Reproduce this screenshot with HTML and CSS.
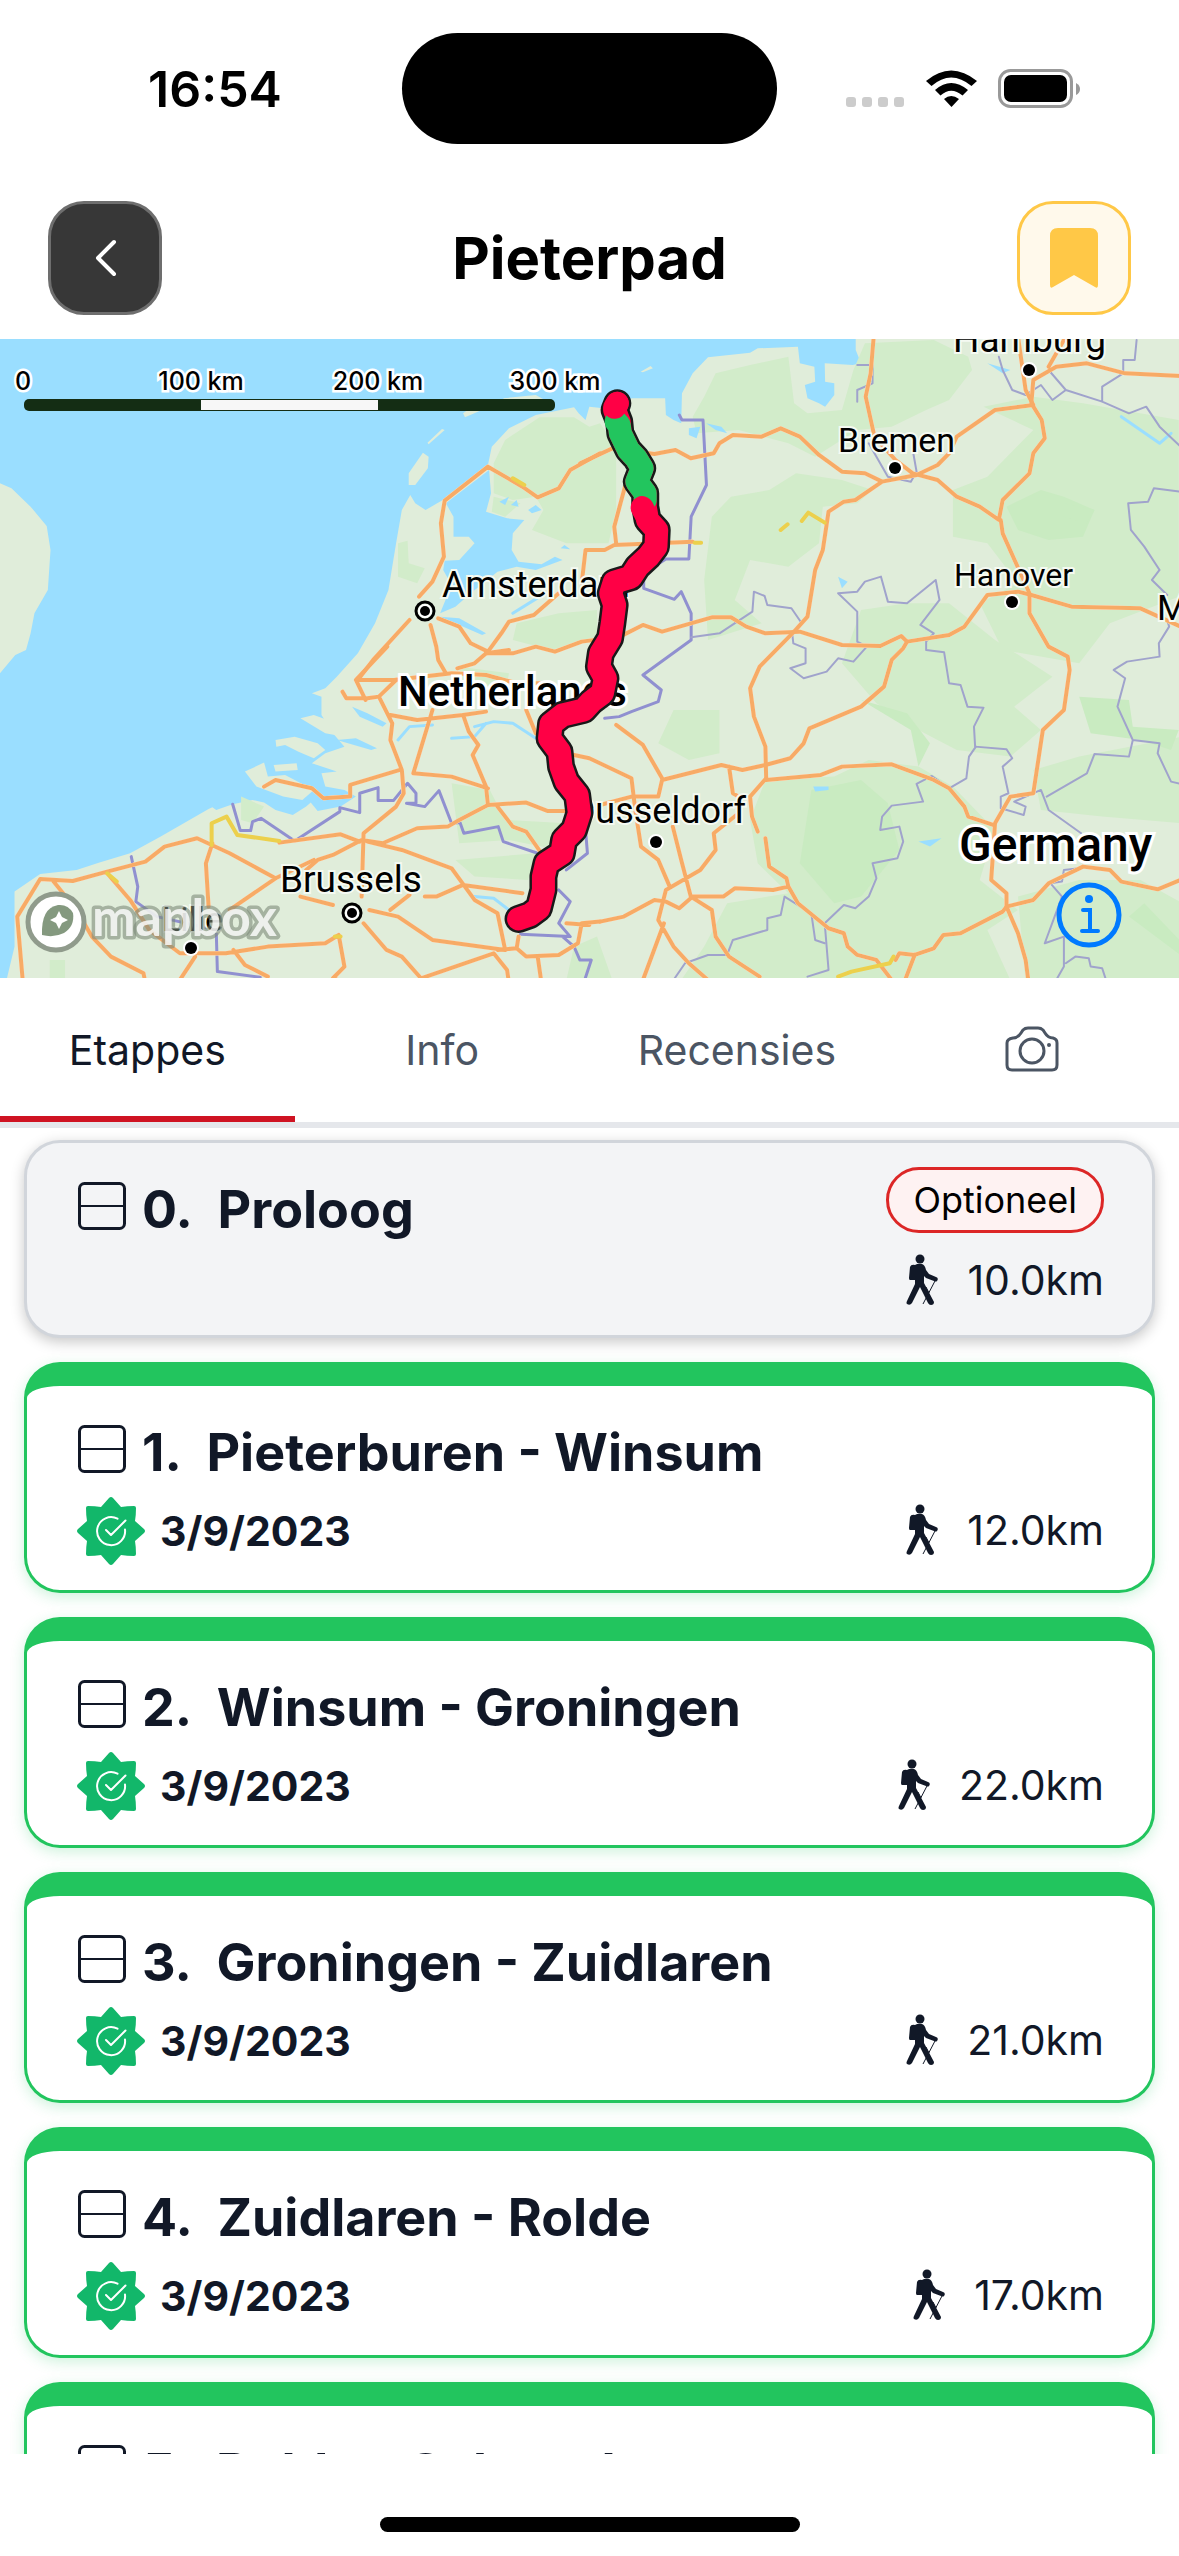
FILE: index.html
```html
<!DOCTYPE html>
<html lang="nl">
<head>
    <meta charset="UTF-8">
    <meta name="viewport" content="width=device-width, initial-scale=1.0">
    <title>Pieterpad</title>
    <link rel="stylesheet" href="styles.css">
</head>
<body>
    <!-- shared icons -->
    <svg class="sprite" aria-hidden="true">
        <symbol id="icon-split" viewBox="0 0 54 54">
            <rect x="4.500" y="4.500" width="45" height="45" rx="5" fill="none" stroke="currentColor" stroke-width="3"/>
            <path d="M4 27H50" stroke="currentColor" stroke-width="2"/>
        </symbol>
        <symbol id="icon-done" viewBox="0 0 72 72">
            <path d="M38 3L46 12Q52 11 59 11Q61 11 61 13Q61 20 60 26L69 34Q71 36 69 38L60 46Q61 52 61 59Q61 61 59 61Q52 61 46 60L38 69Q36 71 34 69L26 60Q20 61 13 61Q11 61 11 59Q11 52 12 46L3 38Q1 36 3 34L12 26Q11 20 11 13Q11 11 13 11Q20 11 26 12L34 3Q36 1 38 3Z" fill="#12b76a"/>
            <path d="M42.500 23.700A14 14 0 1 0 50 34.500M31 35L36 40L50.500 25.500" fill="none" stroke="#fff" stroke-width="2" stroke-linecap="round" stroke-linejoin="round"/>
        </symbol>
        <symbol id="icon-hiker" viewBox="0 0 36 54">
            <circle cx="15" cy="6" r="4.500"/>
            <path d="M5 14Q6 11 10 12Q13 10 17 11Q20 12 21 17L24 21L31 24Q34 25 32 28Q31 29 29 28L21 25L19 23V30L29 49Q29 52 26 52Q24 52 23 50L15 34L7 50Q5 53 2 51Q1 50 2 48L10 31V27H5Q4 27 4 25Z"/>
            <path d="M31 26L18 51M24 40L21 34" fill="none" stroke="currentColor" stroke-width="1"/>
        </symbol>
    </svg>

    <div class="app">
        <div class="status">
            <span class="time">16:54</span>
            <span class="island"></span>
            <svg class="status-icons" viewBox="0 0 240 48" aria-hidden="true">
                <g fill="#ccc">
                    <rect x="6" y="32" width="10" height="10" rx="3"/>
                    <rect x="22" y="32" width="10" height="10" rx="3"/>
                    <rect x="38" y="32" width="10" height="10" rx="3"/>
                    <rect x="54" y="32" width="10" height="10" rx="3"/>
                </g>
                <path d="M86 16Q111 -5 137 16L131.500 21Q111 4 91.500 21ZM95 25Q111 11 128 25L122.500 30.500Q111 21 100.500 30.500ZM104 34Q111 28 119 34L111.500 42Z"/>
                <rect x="159.500" y="5.500" width="72" height="36" rx="11" fill="none" stroke="#999" stroke-width="3"/>
                <rect x="164" y="10" width="63" height="27" rx="7"/>
                <path d="M236 18Q240 20 240 24Q240 28 236 30Z" fill="#999"/>
            </svg>
        </div>

        <header class="header">
            <button class="square-btn back" aria-label="Terug">
                <svg width="54" height="54" viewBox="0 0 54 54"><path d="M36 11L20 27L36 43" fill="none" stroke="#fff" stroke-width="4" stroke-linecap="round" stroke-linejoin="round"/></svg>
            </button>
            <h1>Pieterpad</h1>
            <button class="square-btn saved" aria-label="Bewaard">
                <svg width="54" height="66" viewBox="0 0 54 66"><path d="M11 3H43Q51 3 51 11V60Q51 64 48 62L27 50L6 62Q3 64 3 60V11Q3 3 11 3Z" fill="#ffc847"/></svg>
            </button>
        </header>

        <div class="map">
            <svg class="map-canvas" viewBox="0 0 1179 639" preserveAspectRatio="xMidYMid slice">
                <g transform="scale(.3827 .3333) translate(0 -27)">
                    <!-- land -->
                    <g class="land">
                        <path d="M0 460L30 475L80 530L122 588L132 660L125 780L90 850L80 910L68 960L40 975L0 1030Z"/>
                        <path d="M15 1960L38 1850L38 1685L105 1632L200 1620L260 1598L340 1570L420 1520L545 1437L555 1432L565 1440L608 1423L660 1410L690 1418L720 1440L765 1455L800 1430L812 1418L830 1443L890 1430L930 1400L900 1380L850 1370L840 1330L880 1325L815 1300L850 1270L900 1250L870 1210L840 1155L840 1100L815 1090L850 1075L880 1040L935 970L980 880L1015 780L1035 640L1050 540L1072 495L1085 520L1112 540L1165 505L1275 405L1285 350L1330 295L1400 255L1500 232L1512 250L1530 270L1540 230L1620 240L1650 205L1738 205L1740 255L1760 270L1780 280L1782 190L1810 130L1850 82L1960 68L1980 55L2085 50L2090 100L2128 110L2130 155L2103 165L2110 205L2140 220L2156 230L2180 195L2180 160L2156 155L2155 100L2228 105L2250 100L2236 60L2236 20L3090 20V1960Z"/>
                        <path d="M1068 430L1105 368L1120 380L1118 415L1085 465H1068ZM1117 338L1155 297L1162 300L1120 343ZM1210 250L1240 225L1270 235L1215 262ZM1315 205L1400 195L1420 208L1320 215ZM1674 125L1700 108L1706 115L1680 127Z"/>
                        <path d="M640 1325L690 1298L700 1340L745 1335L820 1380L790 1410L740 1400L670 1370ZM715 1305L775 1300L778 1320L720 1325ZM720 1230L770 1220L830 1240L850 1260L820 1285L780 1265L745 1245L722 1250ZM785 1165L820 1155L880 1180L900 1220L850 1210Z"/>
                    </g>
                    <g class="wood">
                        <path d="M1290 400L1320 330L1410 262L1500 262L1540 290L1568 280L1610 350V540L1590 640H1480L1390 600L1420 540L1400 500L1340 510L1290 490ZM1290 500L1360 520L1320 560L1285 545ZM1040 640L1065 632L1068 700L1110 715L1090 760L1040 740ZM1350 880L1460 850L1560 840V920L1440 960L1340 930Z"/>
                        <path d="M1810 260L1840 200L1870 130L1960 105L2060 80L2075 220L2110 250L2200 240L2230 120L2260 40L2440 30L2530 80L2540 120L2480 210L2420 240L2330 290L2240 300L2130 380L2060 340L1930 300L1820 310Z"/>
                        <path d="M1860 560L1910 500L2010 480L2080 430L2200 450L2280 480L2240 520L2150 530L2140 640L2060 710L1960 690L1920 810L1990 880L1850 930L1840 750Z"/>
                        <path d="M2570 230L2700 200L2830 220L3080 270V800L2900 880L2820 1000L2620 960L2560 820L2660 760L2580 640L2490 620L2490 480L2580 440L2700 300Z"/>
                        <path d="M2250 840L2370 820L2480 820L2600 930L2750 1040L2650 1130L2720 1200L2640 1280L2500 1260L2400 1200L2290 1120L2200 1000Z"/>
                        <path d="M2000 1350L2180 1340L2270 1290L2400 1310L2490 1370L2600 1500L2560 1650L2660 1740L2580 1800L2640 1950H1780L1840 1850L1900 1720L2060 1690L1980 1600L1960 1470Z"/>
                        <path d="M2660 1700L2820 1650L2980 1650L3090 1720V1960H2680ZM2700 1320L2820 1280L3090 1220V1480L2880 1460L2720 1440Z"/>
                        <path d="M1760 1140H1880L1880 1270L1800 1290L1720 1240ZM1180 1360L1280 1380L1320 1470L1480 1480L1460 1560L1330 1530L1200 1540ZM1190 1590L1400 1570L1380 1650L1240 1640ZM1500 1850L1560 1820L1600 1950H1480ZM630 1400L690 1430L660 1480L630 1470ZM1200 1010L1330 1030L1320 1090L1210 1070ZM130 1890H170V1960H130Z"/>
                    </g>
                    <g class="forest">
                        <path d="M2630 530L2720 480L2780 500L2860 540L2830 620L2740 630L2660 600Z"/>
                        <path d="M2780 520L2860 540L2840 580L2780 560ZM2820 1100L2950 1110L2960 1190L3080 1200L3060 1260L2980 1230L2850 1210ZM2990 1720L3090 1840V1880L2950 1760Z"/>
                        <path d="M2120 1380L2250 1350L2320 1420L2350 1560L2250 1700L2180 1720L2090 1600ZM2250 1110L2370 1150L2430 1240L2400 1310L2380 1200Z"/>
                    </g>
                    <!-- lakes and rivers -->
                    <path class="water" d="M1278 420L1165 520L1185 560L1185 620L1225 620L1240 640L1200 690L1162 692L1158 720L1180 765L1150 850L1190 830L1230 790L1300 725L1350 710L1400 720L1470 690L1450 680L1415 703L1355 695L1337 660L1340 610L1370 570L1325 565L1270 545L1283 490ZM1305 515L1330 500L1320 525ZM1335 525L1350 510L1355 530ZM1380 540L1400 525L1415 540L1390 550ZM1465 655L1475 645L1490 658ZM1150 860L1200 865L1270 910L1260 915L1200 885ZM2190 740L2215 755L2200 775ZM2125 1370H2165V1380L2130 1385ZM2400 1535L2460 1525L2430 1550ZM1800 295L1830 290L1820 325L1800 315ZM1845 280L1885 290L1900 310L1870 300ZM2580 100L2640 120L2620 130ZM920 1130L960 1150L1010 1180L1000 1190L940 1160ZM880 1230L930 1225L985 1255L970 1260Z"/>
                    <path class="river" d="M1040 1230L1070 1190L1130 1185M1240 1190L1290 1175L1340 1180L1400 1225M1180 1225L1240 1220L1270 1180M2930 260L3030 340L3060 310M1240 1700L1290 1705L1330 1740M1340 850L1410 800"/>

                    <path class="border" d="M1775 255L1782 270H1837L1846 465L1806 560L1800 687H1740L1682 730V775L1762 808L1780 785L1806 850V930L1680 1035L1728 1080L1720 1115L1650 1145L1618 1160L1580 1165"/>
                    <path class="border" d="M1530 1500L1535 1570L1480 1620M1460 1680L1490 1715L1460 1780L1490 1820L1360 1813M1470 1820L1500 1850L1515 1890L1545 1890L1525 1960"/>
                    <path class="border" d="M608 1423L628 1502H655L660 1475L682 1465L770 1533L888 1445V1433L940 1448V1390L988 1373V1412H1028L1065 1360L1087 1390V1420H1062L1110 1430L1147 1382L1180 1480L1202 1478L1212 1510L1302 1490L1315 1535L1405 1570"/>
                    <path class="border" d="M343 1580L360 1670L355 1715L410 1760L565 1800L568 1925L680 1942"/>
                    <g class="border thin">
                        <path d="M1806 922L1880 910L1966 845L1970 785L1998 798L2005 825L2068 835L2095 880L2070 910L2073 940L2105 955V1000L2065 1015L2100 1045L2160 1025L2190 985L2230 995L2265 950L2240 935V845L2190 790L2240 785L2260 755L2302 740L2320 815L2370 820L2445 750L2455 810L2405 885L2440 910L2420 935V960L2467 967L2480 1060L2510 1065L2528 1130L2570 1133L2545 1190L2548 1250L2630 1258L2645 1285L2620 1310L2635 1390L2615 1400V1435L2675 1455L2680 1430L2650 1415L2720 1380L2740 1440L2825 1510"/>
                        <path d="M2550 1250L2532 1280L2525 1345L2480 1375L2435 1338L2395 1362L2412 1415L2330 1427L2305 1460L2300 1500L2350 1490L2360 1535L2345 1585L2280 1600L2290 1645L2270 1700L2235 1735L2205 1725L2155 1780L2165 1920L2110 1940"/>
                        <path d="M2735 1400L2840 1330L2860 1272L2950 1280L2960 1230L3030 1240L3025 1270L3060 1355L3085 1362M2960 1230L2920 1130L2940 1045L2910 1020L2945 995L3030 980L3028 940L3055 890L3050 870M3050 795L3010 750L3030 720L2990 650L2955 600L2948 520L3000 515L3015 475L3085 485"/>
                        <path d="M2610 80L2620 120L2645 180L2680 195L2720 165L2750 210L2785 180L2880 215L2950 250L2995 230L3030 290L3085 350M2880 215V170L2935 130V90H2965L2970 30M2740 120L2785 180M2270 340L2320 440L2380 455L2395 425L2385 360M2240 105H2280V160L2240 180V215"/>
                        <path d="M1760 1950L1790 1900L1850 1875H1900L1915 1830L2005 1800V1765L2040 1755L2050 1700L2120 1750L2130 1830L2155 1840M2820 1615L2780 1620L2775 1655L2745 1660L2775 1700L2730 1840L2780 1820V1910L2760 1950M2785 1900L2810 1880L2845 1885L2850 1910L2880 1915L2890 1950"/>
                    </g>

                    <g id="roads" class="road-casing">
                        <path d="M1568 370L1490 420L1460 475L1405 502L1365 470L1275 410L1162 512L1152 580L1160 680L1130 755L1095 800M1070 870L975 990L935 1050L1030 1050L1180 1030L1270 1035L1350 1060L1420 1060M1145 865L1200 890L1230 940L1275 965L1240 1000L1195 1015M1275 965L1310 910L1330 875L1395 855L1460 790M1275 970H1340L1400 950L1450 965L1520 935L1620 920L1680 885L1730 905L1860 862L1910 862L1950 890L2000 910L2090 905L2200 945L2300 948L2355 918L2370 935L2480 915L2520 890L2580 795L2660 785L2695 795L2800 830L2980 835L3085 890"/>
                        <path d="M1125 885L1140 950L1145 990L1165 1030M1012 950L930 1050L955 1110M895 1085L905 1105H960L990 1100L1035 1050M990 1100L1025 1180L1020 1230L1050 1320L1055 1390L1035 1430L950 1510L945 1700M1130 1140L1080 1330L1180 1340L1275 1375M1020 1155L1090 1170L1210 1155L1270 1145M1210 1155L1225 1205L1250 1245L1235 1275L1270 1370L1275 1425L1200 1470L1170 1490L1090 1495L1000 1540L945 1530L870 1575L830 1590L800 1620M1270 970L1330 960M1375 1140L1400 1210"/>
                        <path d="M1530 660L1520 760M1516 400L1600 355L1710 372L1765 360L1805 385L1865 370L1880 340L1915 315L1990 320L2040 295L2090 320L2140 375L2200 425L2260 430L2305 455L2395 435L2450 405L2480 370L2500 320L2600 240L2700 225L2680 180L2660 20M2305 455L2235 510L2205 515L2165 545L2150 660L2130 720L2110 860L2075 905L1985 1010L1960 1075L1970 1160L2000 1250L2002 1345M1640 440L1605 590L1610 640M1530 660H1580L1605 645L1810 635"/>
                        <path d="M2283 20L2275 130L2262 200L2285 320L2340 390L2385 430L2450 450L2500 500L2560 530L2610 570L2620 510L2690 430L2700 370L2730 325L2722 270L2695 220L2700 150L2760 110L2840 100L2940 130L3085 138M2740 110L2780 30M2615 570L2620 610L2690 790V850L2740 950L2790 980L2795 1020L2780 1140L2725 1200L2700 1390L2640 1400L2600 1480L2590 1650L2630 1690V1730L2660 1810L2680 1890L2688 1960"/>
                        <path d="M2370 935L2360 955L2330 990L2310 1070L2250 1130L2115 1195L2100 1240L2065 1285L2000 1305L1940 1320L1885 1305L1730 1350L1720 1400H1650L1568 1425M1610 1185L1680 1245L1730 1345M1905 1310L1915 1390L1930 1400M2002 1345L1960 1400L1965 1460L1980 1505M2002 1350L2145 1335L2200 1310L2330 1303L2440 1350L2480 1375L2520 1430L2530 1460L2595 1485M1500 1275L1540 1285L1650 1345L1660 1440L1675 1550L1720 1590L1750 1670M1758 1490L1780 1590L1805 1700L1860 1740L1870 1820L1905 1880L1985 1940M1930 1450L1865 1510L1870 1560L1830 1620L1740 1680L1720 1770L1760 1850L1800 1900L1850 1950M1568 1775L1630 1760L1710 1710L1740 1715L1775 1735L1810 1700H1890L1920 1675L2020 1680L2060 1670L2055 1645L2010 1610L2000 1525M2060 1670L2085 1720L2165 1795L2205 1810L2215 1850L2240 1875L2290 1890L2330 1950M1735 1780L1680 1950M2340 1890L2350 1870L2390 1875L2440 1855L2465 1815L2510 1810L2620 1745L2630 1730L2700 1710L2740 1660L2830 1610L2900 1620L2930 1655L3025 1678L3085 1650M2390 1875L2365 1950"/>
                        <path d="M690 1370L720 1350L815 1375L845 1405L915 1400V1365L1045 1320M1275 1425L1375 1418L1430 1443H1475M1300 1430L1340 1490L1375 1505L1415 1570M960 1535L1050 1560L1180 1615L1240 1710L1300 1750L1320 1860L1130 1830L1040 1760L965 1740M1110 1700L1140 1700L1210 1665L1365 1690M1020 1740L1070 1695"/>
                        <path d="M60 1960L45 1760L105 1647L190 1653L280 1625L380 1595L430 1550L515 1525L600 1570L720 1645L600 1740M720 1645L820 1590M730 1538L890 1513L940 1535M555 1540L538 1600L545 1730M140 1655L200 1740L240 1820L290 1880L375 1930L380 1960M280 1630L340 1710L390 1800L470 1870L590 1870L700 1850L850 1840L885 1815L900 1910L870 1945L960 1980M610 1860L640 1905L700 1940M510 1880L470 1950M950 1780L1010 1860L1050 1880L1100 1945L1290 1870L1325 1920L1330 1960M1300 1860L1350 1855L1375 1880L1460 1875L1510 1840L1520 1780L1568 1775M1350 1855L1355 1820M1405 1880L1415 1960M785 1700L870 1725M1480 1780L1540 1785"/>
                    </g>
                    <use href="#roads" class="road"/>
                    <path class="road-yellow" d="M1340 445L1370 465M2040 600L2058 583M2095 573L2112 548L2155 578M1815 638H1832M553 1545V1480L592 1460L620 1515L730 1533M280 1630L305 1655M2190 1940L2225 1925L2325 1900L2335 1880M875 1820H890"/>
                </g>

                <g class="labels">
                    <text x="442" y="258" font-size="36">Amsterdam</text>
                    <text x="838" y="113" font-size="34">Bremen</text>
                    <text x="953" y="13" font-size="37">Hamburg</text>
                    <text x="954" y="247" font-size="32">Hanover</text>
                    <text x="1157" y="281" font-size="35">Magdeburg</text>
                    <text x="280" y="553" font-size="37">Brussels</text>
                    <text x="162" y="592" font-size="34">Lille</text>
                    <text x="746" y="484" font-size="36" text-anchor="end">Dusseldorf</text>
                    <text class="country" x="398" y="367" font-size="42">Netherlands</text>
                    <text class="country" x="959" y="522" font-size="48">Germany</text>
                    <text class="country" x="307" y="672" font-size="41">Belgium</text>
                </g>
                <g class="places">
                    <circle cx="1029" cy="31" r="6"/>
                    <circle cx="895" cy="129" r="6"/>
                    <circle cx="1012" cy="263" r="6"/>
                    <circle cx="656" cy="503" r="6"/>
                    <circle cx="191" cy="609" r="6"/>
                    <circle cx="425" cy="272" r="5"/>
                    <circle cx="352" cy="574" r="5"/>
                    <circle class="ring" cx="425" cy="272" r="9"/>
                    <circle class="ring" cx="352" cy="574" r="9"/>
                </g>

                <!-- the trail itself, green part has been walked -->
                <g class="trail" transform="scale(.3827 .3333) translate(0 -27)">
                    <path id="trail" class="outline" d="M1613 220L1606 240L1618 275L1621 310L1642 360L1662 385L1678 415L1664 455L1686 490L1686 530L1692 570L1716 600L1714 650L1694 680L1666 710L1648 742L1605 757L1596 790L1606 825L1600 880L1594 925L1570 970L1565 1010L1582 1045L1574 1090L1545 1115L1525 1140L1470 1155L1440 1182L1436 1225L1462 1265L1466 1310L1480 1355L1508 1395L1514 1450L1500 1500L1474 1530L1468 1570L1428 1600L1420 1640L1420 1680L1408 1735L1385 1755L1355 1767"/>
                    <use href="#trail" class="todo"/>
                    <path class="walked" d="M1610 275L1618 285L1621 310L1642 360L1662 385L1678 415L1664 455L1686 490L1686 510"/>
                    <path class="todo" d="M1613 220L1606 232M1678 533L1688 555"/>
                </g>

                <g class="scale">
                    <rect x="24" y="60" width="531" height="12" rx="5" fill="#142d14"/>
                    <rect x="201" y="61" width="177" height="10" fill="#f7f7f7"/>
                    <text x="23" y="51">0</text>
                    <text x="201" y="51">100 km</text>
                    <text x="378" y="51">200 km</text>
                    <text x="555" y="51">300 km</text>
                </g>
            </svg>
            <a class="mapbox" href="#" aria-label="Mapbox">
                <svg width="264" height="72" viewBox="0 0 264 72">
                    <circle cx="32" cy="36" r="28" fill="#fff" stroke="#909b8c" stroke-width="5"/>
                    <path d="M18 49Q17 22 34 19Q44 18 49 27Q51 40 40 47Q30 52 18 49Z" fill="#84997f"/>
                    <path d="M35 25L38 31L44 34L38 37L35 43L32 37L26 34L32 31Z" fill="#fff"/>
                    <text x="68" y="50">mapbox</text>
                </svg>
            </a>
            <button class="map-info" aria-label="Kaartinformatie">
                <svg width="66" height="66" viewBox="0 0 66 66">
                    <circle cx="33" cy="33" r="30" fill="none" stroke="#007aff" stroke-width="5"/>
                    <circle cx="33" cy="17" r="4" fill="#007aff"/>
                    <path d="M27 28H34V49M26 49H42" fill="none" stroke="#007aff" stroke-width="4" stroke-linecap="round"/>
                </svg>
            </button>
        </div>

        <nav class="tabs">
            <button class="tab active">Etappes</button>
            <button class="tab">Info</button>
            <button class="tab">Recensies</button>
            <button class="tab" aria-label="Foto's">
                <svg width="60" height="54" viewBox="0 0 60 54" fill="none" stroke="currentColor" stroke-width="3">
                    <path d="M11 15Q16 15 19 10L21 7Q23 5 26 5H36Q39 5 41 7L43 10Q46 15 51 15Q55 16 55 20V42Q55 47 50 47H10Q5 47 5 42V20Q5 16 11 15Z"/>
                    <circle cx="30" cy="28" r="12"/>
                    <circle cx="47" cy="22" r="1" stroke-width="2"/>
                </svg>
            </button>
        </nav>

        <main class="list">
            <section class="card optional">
                <div class="info">
                    <div class="name">
                        <svg class="split"><use href="#icon-split"/></svg>
                        <h2>0.&nbsp; Proloog</h2>
                    </div>
                </div>
                <div class="side">
                    <span class="badge">Optioneel</span>
                    <span class="distance"><svg class="hiker"><use href="#icon-hiker"/></svg>10.0km</span>
                </div>
            </section>
            <section class="card done">
                <div class="info">
                    <div class="name">
                        <svg class="split"><use href="#icon-split"/></svg>
                        <h2>1.&nbsp; Pieterburen - Winsum</h2>
                    </div>
                    <div class="date"><svg class="check"><use href="#icon-done"/></svg>3/9/2023</div>
                </div>
                <div class="side">
                    <span class="distance"><svg class="hiker"><use href="#icon-hiker"/></svg>12.0km</span>
                </div>
            </section>
            <section class="card done">
                <div class="info">
                    <div class="name">
                        <svg class="split"><use href="#icon-split"/></svg>
                        <h2>2.&nbsp; Winsum - Groningen</h2>
                    </div>
                    <div class="date"><svg class="check"><use href="#icon-done"/></svg>3/9/2023</div>
                </div>
                <div class="side">
                    <span class="distance"><svg class="hiker"><use href="#icon-hiker"/></svg>22.0km</span>
                </div>
            </section>
            <section class="card done">
                <div class="info">
                    <div class="name">
                        <svg class="split"><use href="#icon-split"/></svg>
                        <h2>3.&nbsp; Groningen - Zuidlaren</h2>
                    </div>
                    <div class="date"><svg class="check"><use href="#icon-done"/></svg>3/9/2023</div>
                </div>
                <div class="side">
                    <span class="distance"><svg class="hiker"><use href="#icon-hiker"/></svg>21.0km</span>
                </div>
            </section>
            <section class="card done">
                <div class="info">
                    <div class="name">
                        <svg class="split"><use href="#icon-split"/></svg>
                        <h2>4.&nbsp; Zuidlaren - Rolde</h2>
                    </div>
                    <div class="date"><svg class="check"><use href="#icon-done"/></svg>3/9/2023</div>
                </div>
                <div class="side">
                    <span class="distance"><svg class="hiker"><use href="#icon-hiker"/></svg>17.0km</span>
                </div>
            </section>
            <section class="card done">
                <div class="info">
                    <div class="name">
                        <svg class="split"><use href="#icon-split"/></svg>
                        <h2>5.&nbsp; Rolde - Schoonloo</h2>
                    </div>
                </div>
            </section>
        </main>

        <footer class="home"><span></span></footer>
    </div>
</body>
</html>
```

FILE: styles.css
```css
*{
    margin: 0;
    padding: 0;
    box-sizing: border-box;
}
body{
    font-family: Inter, "Liberation Sans", sans-serif;
    color: #111827;
    background: #fff;
}
button{
    font: inherit;
    color: inherit;
    background: none;
    border: none;
    cursor: pointer;
}
svg{
    display: block;
    flex: none;
}
.sprite{
    width: 0;
    height: 0;
    position: absolute;
}
.app{
    display: flex;
    flex-direction: column;
    height: 100vh;
    overflow: hidden;
}

/* status bar */
.status{
    flex: none;
    display: grid;
    grid-template-columns: 1fr 375px 1fr;
    align-items: center;
    height: 177px;
}
.status .time{
    padding-left: 28px;
    text-align: center;
    font-size: 50px;
    font-weight: 600;
    color: #000;
}
.status .island{
    height: 111px;
    border-radius: 56px;
    background: #000;
}
.status-icons{
    width: 240px;
    height: 48px;
    margin-left: 63px;
}

/* header */
.header{
    flex: none;
    display: flex;
    align-items: center;
    justify-content: space-between;
    padding: 24px 48px;
}
.header h1{
    font-size: 58px;
    font-weight: 700;
    color: #000;
}
.square-btn{
    display: flex;
    align-items: center;
    justify-content: center;
    width: 114px;
    height: 114px;
    border-radius: 36px;
}
.back{
    background: #373737;
    border: 3px solid #6e6e6e;
}
.saved{
    background: #fff9eb;
    border: 3px solid #ffc847;
}

/* map */
.map{
    flex: none;
    position: relative;
    height: 25vh;
}
.map-canvas{
    width: 100%;
    height: 100%;
    background: #9adeff;
}
.map-canvas path{
    vector-effect: non-scaling-stroke;
    stroke-linejoin: round;
    stroke-linecap: round;
}
.land{
    fill: #e0edda;
}
.wood{
    fill: #d2ecca;
}
.forest{
    fill: #c9ebc1;
}
.water{
    fill: #9adeff;
}
.river{
    fill: none;
    stroke: #9adeff;
    stroke-width: 3px;
}
.border{
    fill: none;
    stroke: #9090d0;
    stroke-width: 3px;
}
.thin{
    stroke: #a0a3cc;
    stroke-width: 2px;
}
.road-casing{
    fill: none;
    stroke-linejoin: round;
}
.road-casing path{
    stroke: inherit;
    stroke-width: inherit;
}
.map-canvas > g > .road-casing{
    stroke: #f7ab66;
    stroke-width: 4px;
    filter: drop-shadow(0 0 2px #fff);
}
.road{
    stroke: #f7ab66;
    stroke-width: 4px;
}
.road-yellow{
    fill: none;
    stroke: #ecd04c;
    stroke-width: 4px;
}
.labels text{
    font-family: Roboto, "Noto Sans", sans-serif;
    fill: #000;
    stroke: #f5faf2;
    stroke-width: 4px;
    paint-order: stroke;
}
.labels .country{
    font-weight: 500;
    stroke: #fff;
    stroke-width: 6px;
}
.places circle{
    fill: #000;
    stroke: #fff;
    stroke-width: 4px;
    paint-order: stroke;
}
.places .ring{
    fill: none;
    stroke: #000;
    stroke-width: 3px;
}
.trail path,
.trail use{
    fill: none;
}
.trail .outline{
    stroke: inherit;
    stroke-width: inherit;
}
.trail{
    stroke: #191919;
    stroke-width: 28px;
}
.trail .todo{
    stroke: #ff0045;
    stroke-width: 23px;
}
.trail .walked{
    stroke: #22c55e;
    stroke-width: 23px;
}
.scale text{
    font-size: 25px;
    font-weight: 500;
    text-anchor: middle;
    fill: #000;
    stroke: #fff;
    stroke-width: 5px;
    paint-order: stroke;
}
.mapbox{
    position: absolute;
    left: 24px;
    bottom: 20px;
}
.mapbox text{
    font-family: Lato, sans-serif;
    font-size: 52px;
    font-weight: 700;
    fill: #fff;
    fill-opacity: 0.8;
    stroke: #7d8a7a;
    stroke-opacity: 0.6;
    stroke-width: 7px;
    stroke-linejoin: round;
}
.map-info{
    position: absolute;
    right: 57px;
    bottom: 30px;
}
.mapbox text{
    paint-order: stroke;
}

/* tabs */
.tabs{
    flex: none;
    display: grid;
    grid-template-columns: repeat(4, 1fr);
    height: 150px;
    border-bottom: 6px solid #e5e7eb;
}
.tab{
    display: flex;
    align-items: center;
    justify-content: center;
    padding-top: 6px;
    border-bottom: 6px solid transparent;
    font-size: 41px;
    color: #4b5563;
}
.tab.active{
    color: #111827;
    border-bottom-color: #cf1322;
}

/* stages */
.list{
    flex: 1;
    min-height: 0;
    display: flex;
    flex-direction: column;
    gap: 24px;
    padding: 12px 24px 0;
    overflow: hidden;
}
.card{
    flex: none;
    display: flex;
    justify-content: space-between;
    padding: 24px 48px;
    border: 3px solid #d1d5db;
    border-radius: 36px;
    background: #fff;
}
.optional{
    background: #f3f4f6;
    box-shadow: 0 4px 14px rgba(0, 0, 0, 0.22);
}
.done{
    border-color: #22c55e;
    border-top-width: 24px;
    box-shadow: 0 4px 14px rgba(34, 197, 94, 0.22);
}
.name{
    display: flex;
    gap: 13px;
}
.name h2{
    font-size: 52px;
    line-height: 86px;
    font-weight: 700;
}
.split{
    width: 54px;
    height: 54px;
    margin-top: 12px;
}
.date{
    display: flex;
    align-items: center;
    gap: 13px;
    height: 70px;
    font-size: 41px;
    font-weight: 700;
}
.check{
    width: 72px;
    height: 72px;
}
.side{
    display: flex;
    flex-direction: column;
    align-items: flex-end;
    justify-content: flex-end;
    gap: 16px;
}
.badge{
    padding: 0 24px;
    border: 3px solid #dc2626;
    border-radius: 33px;
    background: #fef2f2;
    color: #000;
    font-size: 36px;
    line-height: 60px;
}
.distance{
    display: flex;
    align-items: center;
    gap: 26px;
    height: 62px;
    font-size: 41px;
}
.done .distance{
    height: 72px;
}
.hiker{
    width: 36px;
    height: 54px;
    fill: currentColor;
}

/* home indicator */
.home{
    flex: none;
    display: flex;
    justify-content: center;
    align-items: flex-end;
    height: 102px;
    padding-bottom: 24px;
}
.home span{
    width: 420px;
    height: 15px;
    border-radius: 8px;
    background: #000;
}
```
